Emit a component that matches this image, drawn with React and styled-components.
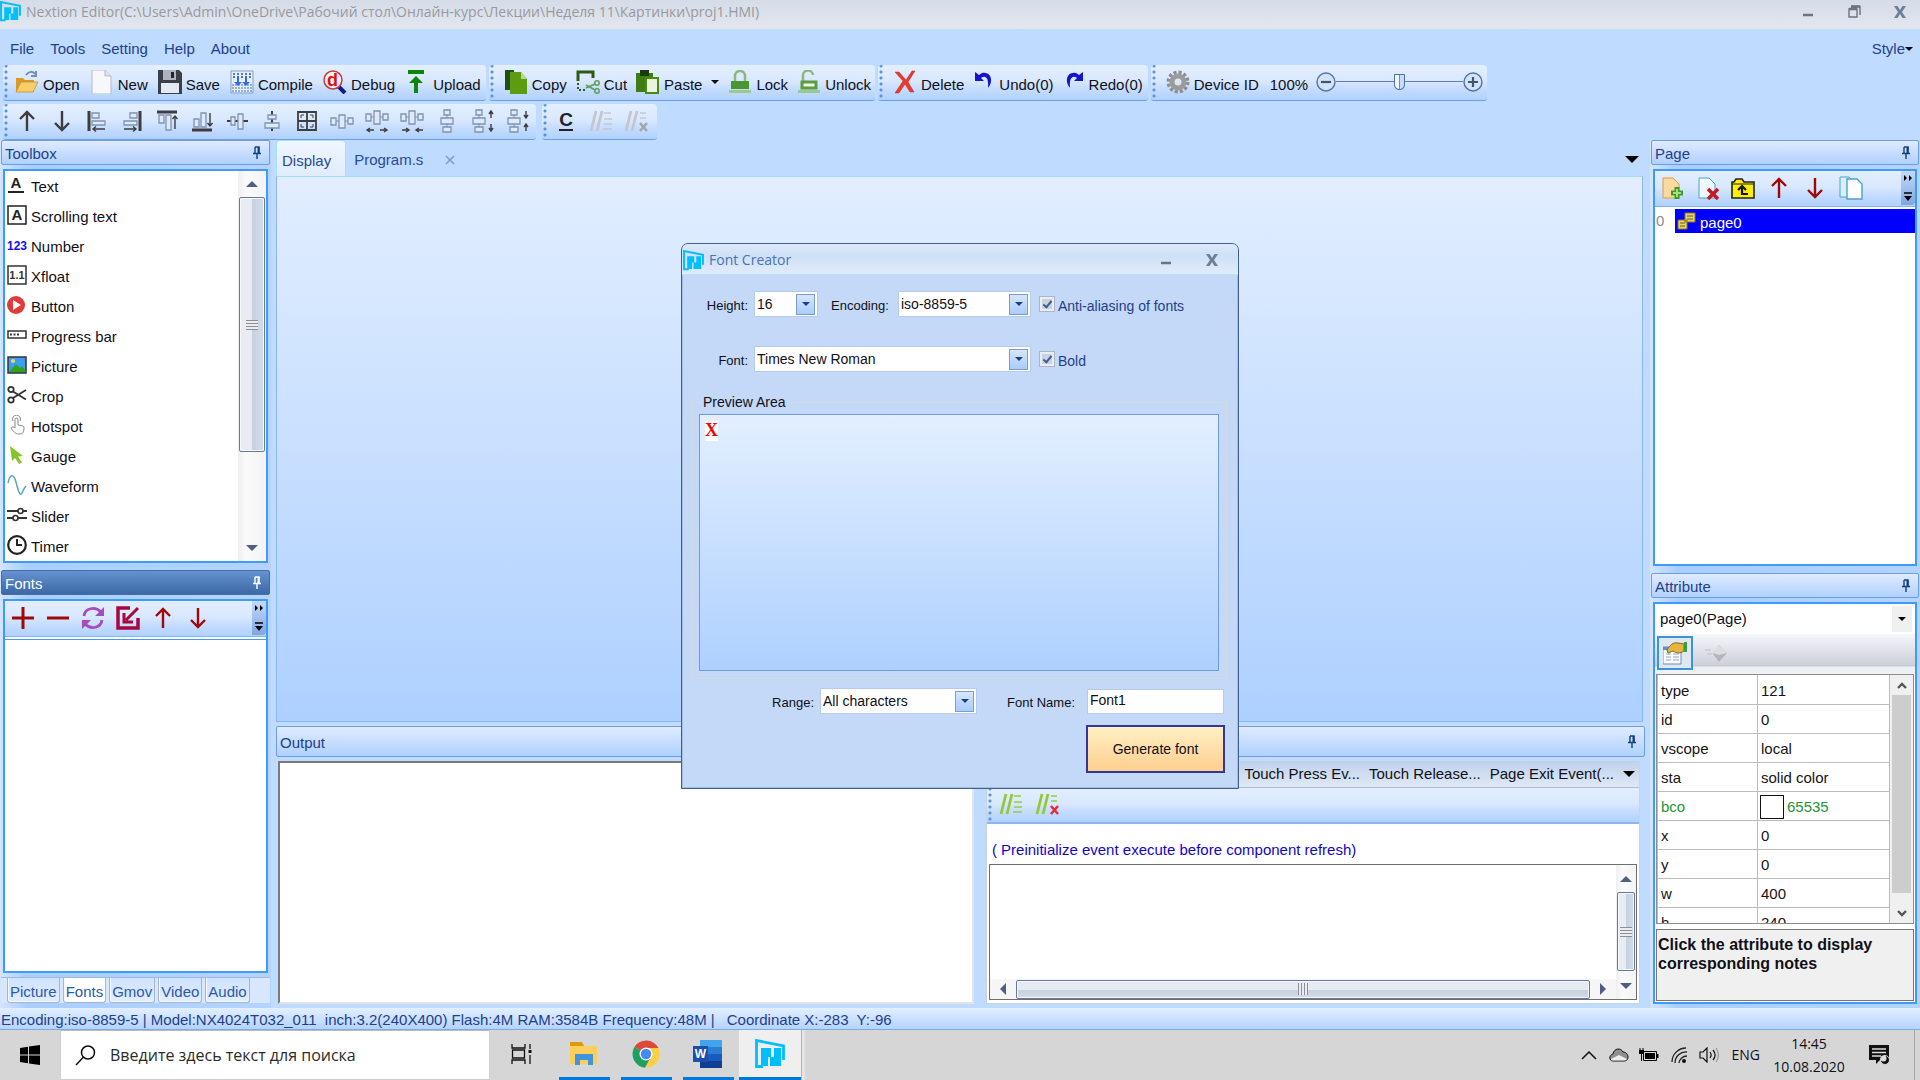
import React from "react";
import styled, { createGlobalStyle, css } from "styled-components";

const ui = '"Liberation Sans", Arial, sans-serif';
const shell = '"Open Sans", "Noto Sans", sans-serif';
const bar = "linear-gradient(#e3efff 0%, #d9e8ff 45%, #c4dcff 70%, #b0d1ff 100%)";
const navy = "#1f3f8a";

const Global = createGlobalStyle`
  *, *::before, *::after { box-sizing: border-box; }
  body { margin: 0; font: 15px/18px ${ui}; color: #101018; background: #bfdbff; }
  button, input, select, textarea { font: inherit; color: inherit; margin: 0; padding: 0; border: 0; background: none; border-radius: 0; }
  button { display: inline-flex; align-items: center; justify-content: center; cursor: default; white-space: nowrap; }
  svg { display: block; flex: none; }
  h1, h2, p, ul, table { margin: 0; padding: 0; font: inherit; }
  ul { list-style: none; }
`;

const Window = styled.div`
  display: flex;
  flex-direction: column;
  height: 100vh;
  overflow: hidden;
`;

/* ---------- window chrome ---------- */
const TitleBar = styled.header`
  display: flex;
  align-items: center;
  flex: none;
  height: 29px;
  padding: 0 8px 6px 0;
  background: linear-gradient(#d5dce8, #e2e7ef);
  color: #98999d;
`;
const TitleText = styled.h1`
  flex: 1;
  margin-left: 5px;
  font-family: ${shell};
  font-size: 14px;
  line-height: 20px;
`;
const WinButton = styled.button`
  width: 24px;
  height: 22px;
  margin-left: 22px;
`;
const MenuBar = styled.nav`
  display: flex;
  align-items: center;
  flex: none;
  height: 36px;
  padding: 4px 7px 0 10px;
  gap: 16px;
  color: ${navy};
`;
const Spacer = styled.span`
  flex: 1;
`;

/* ---------- toolbars ---------- */
const ToolRow = styled.div`
  display: flex;
  flex: none;
  padding: 0 3px ${(p) => p.$bottom || 0}px;
  gap: ${(p) => p.$gap || 3}px;
`;
const ToolGroup = styled.div`
  display: flex;
  align-items: center;
  height: 36px;
  padding: 0 ${(p) => p.$end || 4}px 2px ${(p) => p.$start || 12}px;
  gap: ${(p) => p.$gap || 9}px;
  background: radial-gradient(circle at 2px 2px, #5c93dd 1px, transparent 2px) 1px 5px / 4px 6px repeat-y, ${bar};
  border-bottom: 1px solid #6f9fe0;
  border-radius: 4px 4px 3px 3px;
`;
const Tool = styled.button`
  gap: 4px;
  align-items: center;
  span { padding-top: 7px; }
`;
const IconTool = styled.button`
  width: 24px;
  height: 24px;
`;
const Caret = styled.i`
  display: block;
  width: 0;
  height: 0;
  border: ${(p) => p.$s || 4}px solid transparent;
  border-top-color: ${(p) => p.$c || "#000"};
  border-bottom: 0;
`;
const CaretUp = styled(Caret)`
  transform: rotate(180deg);
`;
const CaretLeft = styled(Caret)`
  transform: rotate(90deg);
`;
const CaretRight = styled(Caret)`
  transform: rotate(-90deg);
`;
const Zoom = styled.div`
  display: flex;
  align-items: center;
  > label { padding: 7px 8px 0 0; }
`;
const Range = styled.input`
  appearance: none;
  width: 127px;
  height: 20px;
  background: linear-gradient(#5d7fb4, #5d7fb4) 0 9px / 100% 1px no-repeat;
  &::-webkit-slider-thumb {
    appearance: none;
    width: 11px;
    height: 16px;
    border: 1px solid #4e71a8;
    border-radius: 1px 1px 6px 6px;
    background: linear-gradient(90deg, #f4f8ff 40%, #6a8cc0 40%, #6a8cc0 55%, #c6dcf8 55%);
  }
`;

/* ---------- docking layout ---------- */
const Main = styled.main`
  display: flex;
  flex: 1;
  min-height: 0;
  gap: 4px;
`;
const Column = styled.div`
  display: flex;
  flex-direction: column;
  flex: ${(p) => (p.$w ? "none" : "1")};
  width: ${(p) => (p.$w ? p.$w + "px" : "auto")};
  min-width: 0;
  padding: 0 1px 4px;
  background: ${(p) => (p.$w ? "linear-gradient(90deg, #d3e5ff, #a9ceff 10%, #b4d4ff)" : "none")};
`;
const PanelHead = styled.div`
  display: flex;
  align-items: center;
  justify-content: space-between;
  flex: none;
  height: ${(p) => p.$h || 25}px;
  padding: 3px 7px 0 3px;
  color: ${(p) => (p.$active ? "#fff" : navy)};
  background: ${(p) => (p.$active ? "linear-gradient(#6592d0, #3c68a6)" : "linear-gradient(#dfebff, #b0d1ff)")};
  border: 1px solid ${(p) => (p.$active ? "#44709f" : "#6d9de0")};
  border-radius: 2px;
  svg { margin-bottom: 4px; }
`;
const Body = styled.section`
  display: flex;
  flex-direction: column;
  flex: ${(p) => (p.$h ? "none" : "1")};
  height: ${(p) => (p.$h ? p.$h + "px" : "auto")};
  min-height: 0;
  margin: 4px 2px ${(p) => p.$mb || 0}px;
  border: 2px solid #3e9bfa;
  background: #fff;
  overflow: hidden;
`;
const ToolboxWrap = styled.div`
  display: flex;
  flex: 1;
  min-height: 0;
`;
const ToolboxList = styled.ul`
  flex: 1;
  padding-top: 1px;
  overflow: hidden;
`;
const ToolboxItem = styled.li`
  height: 30px;
`;
const ToolboxButton = styled.button`
  gap: 4px;
  width: 100%;
  height: 30px;
  padding-left: 2px;
  justify-content: flex-start;
  svg { margin-bottom: 4px; }
`;

/* ---------- scrollbars ---------- */
const VScroll = styled.div`
  display: flex;
  flex-direction: column;
  align-items: center;
  flex: none;
  width: ${(p) => p.$w || 28}px;
  background: linear-gradient(90deg, #efefef, #fafafa 30%, #f3f3f3);
`;
const HScroll = styled.div`
  display: flex;
  align-items: center;
  flex: none;
  height: 20px;
  background: #f6f6f6;
`;
const Arrow = styled.button`
  width: 26px;
  height: ${(p) => p.$h || 27}px;
`;
const thumb = css`
  display: flex;
  align-items: center;
  justify-content: center;
  border: 1px solid #66789c;
  border-radius: 2px;
  box-shadow: inset 0 0 0 1px #f4f7fb;
`;
const VThumb = styled.div`
  ${thumb}
  width: calc(100% - 2px);
  height: ${(p) => p.$h}px;
  background: linear-gradient(90deg, #e9edf2 50%, #c6d2e0 52%, #d3dce8);
`;
const HThumb = styled.div`
  ${thumb}
  flex: 1;
  height: 19px;
  background: linear-gradient(#e6ebf2 50%, #c6d0de 52%, #d3dce8);
`;
const VGrip = styled.span`
  width: 12px;
  height: 10px;
  background: repeating-linear-gradient(#8d8f94 0 1px, #e9edf2 1px 3px);
`;
const HGrip = styled.span`
  width: 10px;
  height: 12px;
  background: repeating-linear-gradient(90deg, #8d8f94 0 1px, #e9edf2 1px 3px);
`;

/* ---------- small panels ---------- */
const PanelTools = styled.div`
  display: flex;
  align-items: center;
  flex: none;
  height: 36px;
  padding-left: ${(p) => p.$pad || 0}px;
  padding-bottom: 1px;
  gap: ${(p) => p.$gap}px;
  background: ${bar};
  border-bottom: 1px solid #86b2ee;
`;
const Overflow = styled.button`
  flex-direction: column;
  justify-content: space-between;
  width: 14px;
  height: 34px;
  padding: 4px 0 4px;
  margin-left: auto;
  background: linear-gradient(#c3dafa, #7fa6e0);
  border-radius: 0 0 4px 0;
`;
const FontList = styled.div`
  flex: 1;
  border-top: 1px solid #3e9bfa;
  margin-top: 2px;
`;
const DockTabs = styled.div`
  display: flex;
  flex: none;
  height: 26px;
  gap: 3px;
  padding-left: 6px;
  margin: 4px 0 1px;
  background: #d8e7ff;
  border-top: 1px solid #9db9e2;
`;
const DockTab = styled.button`
  height: 25px;
  padding: 3px 2px 0;
  color: #2a5aa8;
  background: ${(p) => (p.$on ? "#fff" : "linear-gradient(#cfe2ff, #e2edff)")};
  border: 1px solid #a3b6d6;
  border-top: 0;
  box-shadow: inset 1px -1px #f4f8ff;
  border-radius: 0 0 3px 3px;
`;

/* ---------- documents ---------- */
const DocTabs = styled.div`
  display: flex;
  align-items: flex-end;
  flex: none;
  height: 36px;
  color: #2a4a94;
`;
const DocTab = styled.button`
  height: ${(p) => (p.$on ? 36 : 32)}px;
  padding: ${(p) => (p.$on ? "4px 14px 0 5px" : "0 18px 0 8px")};
  gap: 22px;
  background: ${(p) => (p.$on ? "linear-gradient(#f0f6ff, #e0ecfb)" : "none")};
  border: ${(p) => (p.$on ? "1px solid #a5e0f5" : "0")};
  border-bottom: 0;
  border-radius: 4px 4px 0 0;
`;
const Canvas = styled.section`
  flex: 1;
  min-height: 0;
  margin: 0 2px 4px 0;
  border: 1px solid #8db6ee;
  border-top-color: #a5dcf7;
  background: linear-gradient(#e2eeff, #aed0ff);
`;
const OutputRow = styled.div`
  display: flex;
  flex: none;
  height: 243px;
  margin-top: 4px;
  gap: 12px;
`;
const OutputBox = styled.textarea`
  flex: 695;
  min-width: 0;
  margin-left: 2px;
  resize: none;
  background: #fff;
  border: 2px solid #e2e4e8;
  border-top-color: #7a7a7a;
  border-left-color: #7a7a7a;
`;
const Events = styled.section`
  display: flex;
  flex-direction: column;
  flex: 655;
  min-width: 0;
  margin-right: 5px;
  background: #fff;
  border: 1px solid #c8d4e4;
  border-top: 0;
`;
const EventTabs = styled.div`
  display: flex;
  align-items: center;
  justify-content: flex-end;
  flex: none;
  height: 27px;
  gap: 9px;
  padding-right: 4px;
  background: linear-gradient(#bfd1ea, #dfe9f6);
  border-bottom: 1px solid #aebdd2;
`;
const EventTools = styled(ToolGroup)`
  flex: none;
  border-radius: 0;
  border-bottom: 2px solid #8db6ee;
`;
const Hint = styled.p`
  padding: 17px 5px 5px;
  color: #1404c8;
`;
const Editor = styled.div`
  display: flex;
  flex: 1;
  min-height: 0;
  margin: 0 2px 3px;
  border: 1px solid #6f6f6f;
`;
const EditorMain = styled.div`
  display: flex;
  flex-direction: column;
  flex: 1;
  min-width: 0;
`;
const Code = styled.textarea`
  flex: 1;
  min-height: 0;
  resize: none;
`;

/* ---------- page + attributes ---------- */
const PageRow = styled.div`
  display: flex;
  align-items: center;
  height: 24px;
  margin-top: 2px;
  color: #8c8c8c;
  > span { width: 20px; padding-left: 1px; }
`;
const PageName = styled.button`
  flex: 1;
  height: 24px;
  gap: 4px;
  padding-left: 1px;
  justify-content: flex-start;
  background: #0000fe;
  color: #fff;
  span { padding-top: 3px; }
`;
const AttrSelect = styled.div`
  display: flex;
  align-items: center;
  flex: none;
  height: 30px;
  padding: 0 3px 0 5px;
  select { flex: 1; appearance: none; height: 26px; }
  span { display: flex; align-items: center; justify-content: center; width: 20px; height: 26px; background: #f0f0f0; }
`;
const AttrTools = styled.div`
  display: flex;
  align-items: center;
  flex: none;
  height: 40px;
  padding: 0 2px 2px;
  gap: 6px;
  background: linear-gradient(#f6f7fa, #cdd0da 78%, #b9bcc4 80%, #eef0f6 82%);
`;
const AttrTool = styled.button`
  width: 36px;
  height: 34px;
  border: ${(p) => (p.$on ? "2px solid #3a94dc" : "0")};
  background: ${(p) => (p.$on ? "#dfe8f0" : "none")};
`;
const GridWrap = styled.div`
  display: flex;
  flex: 1;
  min-height: 0;
  margin: 0 1px 5px;
  border: 1px solid #8e8e8e;
  overflow: hidden;
  > div:first-child { flex: 1; overflow: hidden; }
`;
const AttrTable = styled.table`
  width: 100%;
  border-collapse: collapse;
  table-layout: fixed;
  th, td { height: 29px; padding: 3px 4px 0 3px; font-weight: normal; text-align: left; border: 1px solid #bcbcbc; border-top: 0; }
  th { width: 100px; }
`;
const AttrRow = styled.tr`
  color: ${(p) => (p.$green ? "#1e9632" : "#151515")};
  div { display: flex; align-items: center; gap: 3px; height: 24px; margin-left: -1px; }
`;
const Swatch = styled.i`
  width: 24px;
  height: 24px;
  border: 1px solid #111;
  background: #fff;
`;
const PlainScroll = styled.div`
  display: flex;
  flex-direction: column;
  flex: none;
  width: 23px;
  padding: 0 2px;
  background: #f0f0f0;
  button { height: 20px; }
  i { flex: 1; margin-bottom: 10px; background: #cdcdcd; }
`;
const Notes = styled.p`
  flex: none;
  height: 72px;
  margin: 0 1px 1px;
  padding: 5px 1px;
  font-weight: bold;
  font-size: 16px;
  line-height: 19px;
  background: #f0f0f0;
  border: 1px solid #777;
`;
const StatusBar = styled.footer`
  display: flex;
  flex: none;
  height: 22px;
  padding: 3px 1px 0;
  gap: 12px;
  color: ${navy};
  background: linear-gradient(#e3efff, #b4d3ff);
  border-bottom: 1px solid #7ea9e2;
  white-space: pre;
`;

/* ---------- taskbar ---------- */
const Taskbar = styled.footer`
  display: flex;
  flex: none;
  height: 50px;
  background: #d6d6d6;
  font-family: ${shell};
`;
const Start = styled.button`
  width: 60px;
`;
const Search = styled.label`
  display: flex;
  align-items: center;
  gap: 14px;
  width: 430px;
  padding-left: 14px;
  background: #fff;
  border: 1px solid #cfcfcf;
  border-top-color: #bbb;
  input { flex: 1; min-width: 0; font-size: 16px; outline: 0; }
  input::placeholder { color: #2b2b2b; opacity: 1; }
`;
const TaskButton = styled.button`
  display: grid;
  grid-template: 47px 3px / 1fr;
  justify-items: center;
  align-items: center;
  width: ${(p) => p.$w || 62}px;
  background: ${(p) => (p.$on ? "#efefef" : "none")};
  box-shadow: ${(p) => (p.$on ? "1px 0 #b5b5b5, 4px 0 #e4e4e4" : "none")};
  &::after {
    content: "";
    width: ${(p) => (p.$on ? "100%" : "51px")};
    height: 3px;
    background: ${(p) => (p.$open ? "#0078d7" : "transparent")};
  }
`;
const Tray = styled.div`
  display: flex;
  align-items: center;
  margin-left: auto;
  padding-right: 5px;
  gap: 8px;
  font-size: 14px;
`;
const TrayButton = styled.button`
  min-width: 22px;
  height: 30px;
  padding-left: ${(p) => p.$pl || 0}px;
`;
const Clock = styled.time`
  width: 82px;
  text-align: center;
  line-height: 23px;
`;
const Notify = styled.button`
  width: 57px;
  height: 50px;
  padding-right: 14px;
  border-right: 1px solid #a8a8a8;
`;

/* ---------- Font Creator dialog ---------- */
const Overlay = styled.div`
  position: fixed;
  inset: 0;
  display: flex;
  justify-content: center;
  align-items: flex-start;
  padding-top: 243px;
  pointer-events: none;
`;
const Dialog = styled.form`
  width: 558px;
  pointer-events: auto;
  background: #c3d9f7;
  border: 1px solid #3f618f;
  border-radius: 7px 7px 0 0;
  box-shadow: inset 0 0 0 1px #a3bddf;
  font-size: 14px;
`;
const DialogHead = styled.div`
  display: flex;
  align-items: center;
  height: 31px;
  padding: 2px 14px 0 1px;
  color: #4a72b4;
  background: linear-gradient(#dce9f9, #cfe0f7 40%, #e0ecfb);
  border-bottom: 1px solid #b8e2f4;
  border-radius: 6px 6px 0 0;
  h2 { flex: 1; margin-left: 5px; font-family: ${shell}; font-size: 14px; }
`;
const DialogBody = styled.div`
  display: flex;
  flex-direction: column;
  padding: 16px 11px 15px 10px;
`;
const Line = styled.div`
  display: flex;
  align-items: center;
  gap: 6px;
  height: 26px;
  margin-bottom: ${(p) => p.$mb}px;
  padding-right: 3px;
  padding-left: ${(p) => p.$left || 0}px;
  justify-content: ${(p) => (p.$right ? "flex-end" : "flex-start")};
`;
const Label = styled.label`
  width: ${(p) => (p.$w ? p.$w + "px" : "auto")};
  margin-left: ${(p) => p.$ml || 0}px;
  padding-top: 4px;
  text-align: ${(p) => p.$align || "right"};
  font-size: 13px;
`;
const Combo = styled.div`
  display: flex;
  align-items: center;
  width: ${(p) => p.$w}px;
  height: 26px;
  padding-right: 2px;
  background: #fff;
  border: 1px solid #b5cbe8;
  select { flex: 1; min-width: 0; height: 22px; appearance: none; padding: 0 2px; }
  span {
    display: flex;
    align-items: center;
    justify-content: center;
    width: 19px;
    height: 21px;
    border: 1px solid #7f9dcc;
    background: linear-gradient(#d6e6fd, #a9ccfb);
    pointer-events: none;
  }
`;
const Check = styled.label`
  display: flex;
  align-items: center;
  gap: 3px;
  margin-left: 2px;
  color: ${navy};
  span { padding-top: 3px; }
  input {
    appearance: none;
    width: 16px;
    height: 16px;
    border: 1px solid #a9b6c8;
    box-shadow: inset 0 0 0 2px #e9eef5;
    background: #c9d3e0;
    display: grid;
    place-items: center;
  }
  input:checked::after {
    content: "";
    width: 5px;
    height: 9px;
    margin-top: -2px;
    border: solid #3f5f92;
    border-width: 0 2px 2px 0;
    transform: rotate(40deg);
  }
`;
const Group = styled.fieldset`
  min-width: 0;
  margin: 0 0 9px;
  padding: 2px 7px 7px 6px;
  border: 1px solid #d3dbe2;
  legend { padding: 0 4px; line-height: 20px; }
`;
const Preview = styled.div`
  height: 257px;
  padding: 6px 5px;
  border: 1px solid #6f9bd8;
  background: linear-gradient(#e3efff, #aed0ff);
  b { display: inline-block; height: 20px; background: #fff; color: #f00; font: bold 18px/19px "Liberation Serif", serif; }
`;
const NameInput = styled.input`
  width: 137px;
  height: 25px;
  padding: 0 2px 2px;
  margin-left: 6px;
  background: #fff;
  border: 1px solid #b5cbe8;
`;
const Generate = styled.button`
  align-self: flex-end;
  width: 139px;
  height: 48px;
  margin: 0 2px 0 0;
  border: 2px solid #34349c;
  background: linear-gradient(#ffefc4, #ffcf8f);
`;

/* ---------- drawings ---------- */
const S = ({ s = 24, w, h, vb = "0 0 24 24", children }) => (
  <svg width={w || s} height={h || s} viewBox={vb} fill="none" aria-hidden="true">{children}</svg>
);
const Letter = ({ x, y, s, c, w = "bold", children }) => (
  <text x={x} y={y} textAnchor="middle" fontFamily="Liberation Sans" fontWeight={w} fontSize={s} fill={c}>{children}</text>
);
const Logo = ({ s = 21 }) => (
  <S s={s} vb="0 0 30 30">
    <path d="M8 27.500H1.500V1.500L28.500 7v14" stroke="#00bfff" strokeWidth="2.800" />
    <path d="M6 9h10v9h3V9h7v18H15v-9h-2v9H6z" fill="#00bfff" />
  </S>
);
const Pin = ({ c = "#123f80" }) => (
  <S w={10} h={13} vb="0 0 10 13"><path d="M3 1v6M3 1h4v6M1 7.500h8M5 8v5" stroke={c} strokeWidth="1.400" /><path d="M6.500 1v6" stroke={c} strokeWidth="2" /></S>
);
const page = <path d="M4 2h10l6 6v14H4z" />;
const I = {
  open: <S><path d="M1 8h7l2 2h9v12H1z" fill="#d99a2b" /><path d="M1 22 6 12h17l-5 10z" fill="#f7cf68" stroke="#c98f28" strokeWidth=".8" /><path d="M11 5c3-4 7-4 9-1m1-3v5h-5" stroke="#6f8fb5" strokeWidth="2" /></S>,
  newf: <S><path d="M2 0h13l6 6v18H2z" fill="#f7f8fc" stroke="#b5b9c8" /><path d="M15 0v6h6" fill="#dfe3ee" stroke="#b5b9c8" /></S>,
  save: <S><path d="M0 0h21l3 3v21H0z" fill="#3a4048" /><path d="M5 0h13v10H5z" fill="#aeb4bf" /><path d="M13 2h3v6h-3z" fill="#20242a" /><path d="M3 13h18v10H3z" fill="#e4e8f0" /></S>,
  compile: <S><path d="M1 1h22v22H1z" fill="#e4eefc" stroke="#7f9fd0" /><path d="M3 4h18M3 7h18" stroke="#6b7890" strokeWidth="2" strokeDasharray="2 2" /><path d="M2 15h20M2 18h20M2 21h20" stroke="#7a97cc" strokeDasharray="2 1" strokeWidth="1.500" /><path d="M7 6v6H4l4 4 4-4H9V6zM15 6v6h-3l4 4 4-4h-3V6z" fill="#2f6ee0" /></S>,
  debug: <S><path d="M15 16l7 7" stroke="#15158c" strokeWidth="4" /><circle cx="10" cy="10" r="9" fill="#f3f3f6" stroke="#c9383a" strokeWidth="1.500" /><Letter x={9.5} y={16} s={18} c="#e01010">d</Letter></S>,
  upload: <S><path d="M3 0h16v4H3z" fill="#0a860a" /><path d="M11 6l7 7h-5v10H9V13H4z" fill="#0a860a" /></S>,
  copy: <S><path d="M1 0h9v20H1z" fill="#1e5210" /><path d="M6 2h11l6 7v15H6z" fill="#5d9c10" /><path d="M17 2v7h6z" fill="#b6d98a" /></S>,
  cut: <S><path d="M17 8V2H2v9" stroke="#2c5c14" strokeWidth="3" /><path d="M2 13v7h8" stroke="#2c5c14" strokeWidth="2" strokeDasharray="2 2" /><circle cx="21" cy="13" r="2.200" stroke="#5f9c5a" strokeWidth="1.500" /><circle cx="21" cy="21" r="2.200" stroke="#5f9c5a" strokeWidth="1.500" /><path d="M19 14l-9 4M19 20l-9-5" stroke="#5f9c5a" strokeWidth="1.500" /></S>,
  paste: <S><path d="M0 3h17v19H0z" fill="#3f7d12" /><path d="M4 0h9v6H4z" fill="#173f0c" /><path d="M10 8h12v15H10z" fill="#eaf3dc" stroke="#4b8a12" strokeWidth="2" /></S>,
  lock: <S><path d="M7 11V6a5 5 0 0 1 10 0v5" stroke="#8bb878" strokeWidth="2.500" /><path d="M3 11h18v8H3z" fill="#4a9630" /><path d="M1 20h22v3H1z" fill="#9cc88c" /></S>,
  unlock: <S><path d="M6 11V6a5 5 0 0 1 10-1" stroke="#8bb878" strokeWidth="2.500" /><path d="M5 12h14v6H5z" fill="#eef7e6" stroke="#5a9c40" strokeWidth="3" /><path d="M1 20h22v3H1z" fill="#9cc88c" /></S>,
  del: <S><path d="M2 2h4l7 8 6-9h3l-7 11 6 10h-4l-5-8-6 9H2l8-12z" fill="#ee3a2c" stroke="#b52a20" strokeWidth=".5" /></S>,
  undo: <S w={22} h={24} vb="0 0 22 24"><path d="M2 2v9h9L8 8c4-3 8-1 7 10 6-7 3-17-6-15L6 5z" fill="#1414cc" /></S>,
  redo: <S w={22} h={24} vb="0 0 22 24"><path d="M20 2v9h-9l3-3C10 5 6 7 7 18 1 11 4 1 13 3l3 2z" fill="#1414cc" /></S>,
  gear: <S><circle cx="12" cy="12" r="9.500" stroke="#8e8e8e" strokeWidth="4" strokeDasharray="3 2" /><circle cx="12" cy="12" r="6" stroke="#9b9b9b" strokeWidth="5" /><circle cx="12" cy="12" r="3" fill="#dfe6f2" /></S>,
};
const dk = "#3d3d3d";
const arrowUp = (c) => <S><path d="M12 22V3M5 10l7-7 7 7" stroke={c} strokeWidth="2.400" /></S>;
const arrowDown = (c) => <S><path d="M12 2v19M5 14l7 7 7-7" stroke={c} strokeWidth="2.400" /></S>;
const bx = { fill: "#dfeaf8", stroke: "#7f93b0", strokeWidth: 1.3 };
const hTrio = <><path d="M0 10h24" stroke="#7f93b0" /><path d="M1 7h5v7H1zM9 4h6v13H9zM18 7h5v6h-5z" {...bx} /></>;
const vTrio = <><path d="M9 0v24" stroke="#7f93b0" /><path d="M6 1h6v5H6zM3 9h12v6H3zM5 18h8v5H5z" {...bx} /></>;
const align = [
  ["Bring forward", arrowUp(dk)],
  ["Send backward", arrowDown(dk)],
  ["Align left", <S><path d="M4 2v20" stroke={dk} strokeWidth="3" /><path d="M7 4h7v5H7zM7 12h13v4H7z" {...bx} /><path d="M20 20H8m3-2.500L8 20l3 2.500" stroke={dk} strokeWidth="1.400" /></S>],
  ["Align right", <S><path d="M20 2v20" stroke={dk} strokeWidth="3" /><path d="M10 4h7v5h-7zM4 12h13v4H4z" {...bx} /><path d="M4 20h12m-3-2.500 3 2.500-3 2.500" stroke={dk} strokeWidth="1.400" /></S>],
  ["Align top", <S><path d="M2 3h20" stroke={dk} strokeWidth="3" /><path d="M4 6h5v8H4zM11 6h5v15h-5z" {...bx} /><path d="M20 20V7m-2.500 3L20 7l2.500 3" stroke={dk} strokeWidth="1.400" /></S>],
  ["Align bottom", <S><path d="M2 21h20" stroke={dk} strokeWidth="3" /><path d="M4 10h5v8H4zM11 4h5v14h-5z" {...bx} /><path d="M20 4v13m-2.500-3L20 17l2.500-3" stroke={dk} strokeWidth="1.400" /></S>],
  ["Align middle", <S><path d="M2 12h21" stroke={dk} strokeWidth="2" /><path d="M6 8h4v8H6zM13 5h5v15h-5z" {...bx} /></S>],
  ["Align centre", <S><path d="M12 2v20" stroke={dk} strokeWidth="2" /><path d="M8 6h8v4H8zM5 14h14v5H5z" {...bx} /></S>],
  ["Same size", <S><path d="M3 3h18v18H3zM12 3v18M3 12h18" stroke={dk} strokeWidth="1.800" /><path d="M6 9V6h3M15 6h3v3M18 15v3h-3M9 18H6v-3" stroke={dk} /></S>],
  ["Equal horizontal spacing", <S><g transform="translate(0 2)">{hTrio}</g></S>],
  ["Increase horizontal spacing", <S><g transform="translate(0 -2)">{hTrio}</g><path d="M9 21H2m3-2-3 2 3 2M15 21h7m-3-2 3 2-3 2" stroke={dk} strokeWidth="1.400" /></S>],
  ["Decrease horizontal spacing", <S><g transform="translate(0 -2)">{hTrio}</g><path d="M2 21h7m-3-2 3 2-3 2M23 21h-7m3-2-3 2 3 2" stroke={dk} strokeWidth="1.400" /></S>],
  ["Equal vertical spacing", <S><g transform="translate(3 0)">{vTrio}</g></S>],
  ["Increase vertical spacing", <S>{vTrio}<path d="M21 9V2m-2 3 2-3 2 3M21 15v7m-2-3 2 3 2-3" stroke={dk} strokeWidth="1.400" /></S>],
  ["Decrease vertical spacing", <S>{vTrio}<path d="M21 2v7m-2-3 2 3 2-3M21 22v-7m-2 3 2-3 2 3" stroke={dk} strokeWidth="1.400" /></S>],
];
const Comment = ({ c, x }) => (
  <S><path d="M2 22 7 2M8 22l5-20" stroke={c} strokeWidth="2.800" /><path d={x ? "M16 4h6M16 9h6" : "M15 4h7M15 10h8M15 15h8M14 20h9"} stroke={c} strokeWidth="2" opacity=".7" />{x && <path d="M16 14l7 8M23 14l-7 8" stroke={x} strokeWidth="2.600" />}</S>
);
const t20 = (k) => <S s={20} vb="0 0 20 20">{k}</S>;
const toolbox = [
  ["Text", t20(<><Letter x={9} y={13} s={15} c="#222">A</Letter><path d="M1 17h16" stroke="#222" strokeWidth="2" /></>)],
  ["Scrolling text", t20(<><path d="M1 1h18v18H1z" stroke="#222" strokeWidth="1.500" /><Letter x={10} y={15} s={15} c="#222">A</Letter></>)],
  ["Number", t20(<Letter x={10} y={15} s={12} w="bold" c="#1010f0">123</Letter>)],
  ["Xfloat", t20(<><path d="M1 1h18v18H1z" stroke="#333" strokeWidth="1.500" /><Letter x={10} y={14} s={11} c="#333">1.1</Letter></>)],
  ["Button", t20(<><circle cx="9" cy="10" r="9" fill="#e2393a" /><path d="M6 5l8 5-8 5z" fill="#fff" /></>)],
  ["Progress bar", t20(<><path d="M1 6h18v7H1z" stroke="#333" strokeWidth="1.500" /><path d="M3 9.500h9" stroke="#333" strokeWidth="2" strokeDasharray="2 1.500" /></>)],
  ["Picture", t20(<><path d="M1 2h18v16H1z" fill="#3d9df0" stroke="#333" strokeWidth="1.500" /><circle cx="6" cy="6" r="2" fill="#f6d466" /><path d="M2 17l7-8 4 4 2-2 4 6z" fill="#2ea316" /></>)],
  ["Crop", t20(<><circle cx="4" cy="4.500" r="2.700" stroke="#333" strokeWidth="1.800" /><circle cx="4" cy="15" r="2.700" stroke="#333" strokeWidth="1.800" /><path d="M6 6.500l13 8M6 13l13-8" stroke="#333" strokeWidth="1.800" /></>)],
  ["Hotspot", t20(<><path d="M8 12V4.500a1.500 1.500 0 0 1 3 0V10l5 1c1 .5 1 1 1 3-1 5-2 5-5 5-4 0-6-3-8-6 1-2 3-1 4 0z" fill="#fff" stroke="#888" /><path d="M6 6a4 4 0 1 1 7 0" stroke="#888" /></>)],
  ["Gauge", t20(<path d="M3 1l13 10-5 .5 4 6-3 1.500-4-6-3 3z" fill="#86c42c" />)],
  ["Waveform", t20(<path d="M1 8C3-2 7-1 9 7s4 15 6 11 2-5 4-7" stroke="#5aa5c0" strokeWidth="1.500" />)],
  ["Slider", t20(<><path d="M0 6h11M16 6h4M0 13h6M11 13h9" stroke="#333" strokeWidth="1.800" /><circle cx="13.500" cy="6" r="2.500" stroke="#333" strokeWidth="1.600" /><circle cx="8.500" cy="13" r="2.500" stroke="#333" strokeWidth="1.600" /></>)],
  ["Timer", t20(<><circle cx="10" cy="10" r="8.800" stroke="#222" strokeWidth="2.200" /><path d="M10 4v6h5" stroke="#222" strokeWidth="2" /></>)],
];
const red = "#a00808";
const Close = ({ c = "#6b7f99" }) => <S s={14} vb="0 0 14 14"><path d="M1 1h3.500l2.500 4 2.500-4H13L9 7l4 6H9.500L7 9l-2.500 4H1l4-6z" fill={c} /></S>;
const Min = () => <S w={12} h={12} vb="0 0 12 12"><path d="M1 9h10" stroke="#6b7480" strokeWidth="2.500" /></S>;
const Dots = () => (
  <Overflow type="button" aria-label="More tools">
    <S w={10} h={6} vb="0 0 10 6"><path d="M1 0l3 3-3 3zM6 0l3 3-3 3z" fill="#000" /></S>
    <S w={10} h={9} vb="0 0 10 9"><path d="M1 1h8" stroke="#000" strokeWidth="1.500" /><path d="M1 4h8L5 9z" fill="#000" /></S>
  </Overflow>
);
const RoundBtn = ({ plus }) => (
  <S s={20} vb="0 0 20 20"><circle cx="10" cy="10" r="9" fill="#d3e3f8" stroke="#55749f" strokeWidth="1.400" /><path d={plus ? "M5 10h10M10 5v10" : "M5 10h10"} stroke="#44546c" strokeWidth="2.200" /></S>
);

const T = ({ icon, children }) => <Tool type="button">{icon}<span>{children}</span></Tool>;
const V = ({ h, top, w, bottom }) => (
  <VScroll $w={w}>
    <Arrow type="button" aria-label="Scroll up" $h={top}><CaretUp $s={6} $c="#4d5f86" /></Arrow>
    <VThumb $h={h}><VGrip /></VThumb>
    <Spacer />
    <Arrow type="button" aria-label="Scroll down" $h={bottom}><Caret $s={6} $c="#4d5f86" /></Arrow>
  </VScroll>
);
const attrs = [["type", "121"], ["id", "0"], ["vscope", "local"], ["sta", "solid color"], ["bco", "65535"], ["x", "0"], ["y", "0"], ["w", "400"], ["h", "240"]];

const Select = ({ id, w, value }) => (
  <Combo $w={w}><select id={id} defaultValue={value}><option>{value}</option></select><span><Caret $c="#173f8a" /></span></Combo>
);

function FontCreator() {
  return (
    <Overlay>
      <Dialog role="dialog" aria-label="Font Creator" onSubmit={(e) => e.preventDefault()}>
        <DialogHead>
          <Logo /><h2>Font Creator</h2>
          <WinButton type="button" aria-label="Minimize"><Min /></WinButton>
          <WinButton type="button" aria-label="Close"><Close /></WinButton>
        </DialogHead>
        <DialogBody>
          <Line $left={9} $mb={29}>
            <Label htmlFor="height" $w={47}>Height:</Label><Select id="height" w={64} value="16" />
            <Label htmlFor="enc" $w={61} $ml={7} $align="left">Encoding:</Label><Select id="enc" w={133} value="iso-8859-5" />
            <Check><input type="checkbox" defaultChecked /><span>Anti-aliasing of fonts</span></Check>
          </Line>
          <Line $left={9} $mb={20}>
            <Label htmlFor="font" $w={47}>Font:</Label><Select id="font" w={277} value="Times New Roman" />
            <Check><input type="checkbox" defaultChecked /><span>Bold</span></Check>
          </Line>
          <Group><legend>Preview Area</legend><Preview><b>X</b></Preview></Group>
          <Line $right $mb={11}>
            <Label htmlFor="range">Range:</Label><Select id="range" w={157} value="All characters" />
            <Label htmlFor="name" $ml={20} $w={72}>Font Name:</Label><NameInput id="name" defaultValue="Font1" />
          </Line>
          <Generate type="submit">Generate font</Generate>
        </DialogBody>
      </Dialog>
    </Overlay>
  );
}

export default function App() {
  return (
    <Window>
      <Global />
      <TitleBar>
        <Logo /><TitleText>Nextion Editor(C:\Users\Admin\OneDrive\Рабочий стол\Онлайн-курс\Лекции\Неделя 11\Картинки\proj1.HMI)</TitleText>
        <WinButton type="button" aria-label="Minimize"><Min /></WinButton>
        <WinButton type="button" aria-label="Restore"><S s={13} vb="0 0 13 13"><path d="M1 4h8v8H1zM3 1.500h9V10" stroke="#6b7480" strokeWidth="1.400" /><path d="M1 4h8M3 1.500h9" stroke="#6b7480" strokeWidth="2.500" /></S></WinButton>
        <WinButton type="button" aria-label="Close"><Close /></WinButton>
      </TitleBar>
      <MenuBar>
        {["File", "Tools", "Setting", "Help", "About"].map((m) => <button type="button" key={m}>{m}</button>)}
        <Spacer />
        <button type="button">Style<Caret /></button>
      </MenuBar>
      <ToolRow $bottom={3}>
        <ToolGroup $gap={10} $end={5}>
          <T icon={I.open}>Open</T><T icon={I.newf}>New</T><T icon={I.save}>Save</T>
          <T icon={I.compile}>Compile</T><T icon={I.debug}>Debug</T><T icon={I.upload}>Upload</T>
        </ToolGroup>
        <ToolGroup $start={15}>
          <T icon={I.copy}>Copy</T><T icon={I.cut}>Cut</T><T icon={I.paste}>Paste</T>
          <button type="button" aria-label="Paste options"><Caret /></button>
          <T icon={I.lock}>Lock</T><T icon={I.unlock}>Unlock</T>
        </ToolGroup>
        <ToolGroup $start={15} $end={5}>
          <T icon={I.del}>Delete</T><T icon={I.undo}>Undo(0)</T><T icon={I.redo}>Redo(0)</T>
        </ToolGroup>
        <ToolGroup $start={15} $gap={11}>
          <T icon={I.gear}>Device ID</T>
          <Zoom><label htmlFor="zoom">100%</label>
            <button type="button" aria-label="Zoom out"><RoundBtn /></button>
            <Range type="range" id="zoom" defaultValue="50" />
            <button type="button" aria-label="Zoom in"><RoundBtn plus /></button>
          </Zoom>
        </ToolGroup>
      </ToolRow>
      <ToolRow $gap={6}>
        <ToolGroup $gap={11} $end={7}>
          {align.map(([n, icon]) => <IconTool type="button" key={n} aria-label={n}>{icon}</IconTool>)}
        </ToolGroup>
        <ToolGroup $gap={11} $end={9}>
          <IconTool type="button" aria-label="Syntax check"><S><Letter x={12} y={17} s={19} c="#222">C</Letter><path d="M5 21h14" stroke="#222" strokeWidth="2" /></S></IconTool>
          <IconTool type="button" aria-label="Comment"><Comment c="#c3c6cc" /></IconTool>
          <IconTool type="button" aria-label="Uncomment"><Comment c="#c3c6cc" x="#a3a6ac" /></IconTool>
        </ToolGroup>
      </ToolRow>

      <Main>
        <Column $w={271}>
          <PanelHead><span>Toolbox</span><Pin /></PanelHead>
          <Body $h={394} $mb={7}>
            <ToolboxWrap>
              <ToolboxList>
                {toolbox.map(([n, icon]) => <ToolboxItem key={n}><ToolboxButton type="button">{icon}<span>{n}</span></ToolboxButton></ToolboxItem>)}
              </ToolboxList>
              <V h={255} top={26} />
            </ToolboxWrap>
          </Body>
          <PanelHead $active><span>Fonts</span><Pin c="#fff" /></PanelHead>
          <Body>
            <PanelTools $pad={6} $gap={11}>
              <IconTool type="button" aria-label="Add"><S><path d="M12 1v22M1 12h22" stroke={red} strokeWidth="3" /></S></IconTool>
              <IconTool type="button" aria-label="Remove"><S><path d="M1 12h22" stroke={red} strokeWidth="3" /></S></IconTool>
              <IconTool type="button" aria-label="Replace"><S><path d="M3 10C4 2 14 0 20 6M21 14c-1 8-11 10-17 4" stroke="#a64bbd" strokeWidth="2.800" /><path d="M23 1v9h-9zM1 23v-9h9z" fill="#a64bbd" /></S></IconTool>
              <IconTool type="button" aria-label="Insert"><S><path d="M14 2H2v20h20V12" stroke="#a8073e" strokeWidth="3.500" /><path d="M22 2L10 14M8 7v9h9" stroke="#a8073e" strokeWidth="3" /></S></IconTool>
              <IconTool type="button" aria-label="Move up">{arrowUp(red)}</IconTool>
              <IconTool type="button" aria-label="Move down">{arrowDown(red)}</IconTool>
              <Dots />
            </PanelTools>
            <FontList />
          </Body>
          <DockTabs>
            {["Picture", "Fonts", "Gmov", "Video", "Audio"].map((t) => <DockTab type="button" key={t} $on={t === "Fonts"}>{t}</DockTab>)}
          </DockTabs>
        </Column>

        <Column>
          <DocTabs>
            <DocTab type="button" $on>Display</DocTab>
            <DocTab type="button">Program.s<S s={10} vb="0 0 10 10"><path d="M1 1l8 8M9 1L1 9" stroke="#7f9cc8" strokeWidth="1.500" /></S></DocTab>
            <Spacer />
            <Arrow type="button" aria-label="Open documents" $h={34}><Caret $s={7} /></Arrow>
          </DocTabs>
          <Canvas />
          <PanelHead $h={31}><span>Output</span><Pin /></PanelHead>
          <OutputRow>
            <OutputBox aria-label="Output" readOnly />
            <Events>
              <EventTabs>
                <button type="button">Touch Press Ev...</button>
                <button type="button">Touch Release...</button>
                <button type="button">Page Exit Event(...</button>
                <button type="button" aria-label="More events"><Caret $s={6} /></button>
              </EventTabs>
              <EventTools $gap={12}>
                <IconTool type="button" aria-label="Comment"><Comment c="#93c83c" /></IconTool>
                <IconTool type="button" aria-label="Uncomment"><Comment c="#93c83c" x="#e03040" /></IconTool>
              </EventTools>
              <Hint>( Preinitialize event execute before component refresh)</Hint>
              <Editor>
                <EditorMain>
                  <Code aria-label="Event code" />
                  <HScroll>
                    <Arrow type="button" aria-label="Scroll left" $h={18}><CaretLeft $s={6} $c="#4d5f86" /></Arrow>
                    <HThumb><HGrip /></HThumb>
                    <Arrow type="button" aria-label="Scroll right" $h={18}><CaretRight $s={6} $c="#4d5f86" /></Arrow>
                  </HScroll>
                </EditorMain>
                <V h={79} w={20} top={27} bottom={27} />
              </Editor>
            </Events>
          </OutputRow>
        </Column>

        <Column $w={270}>
          <PanelHead><span>Page</span><Pin /></PanelHead>
          <Body $h={397} $mb={7}>
            <PanelTools $pad={4} $gap={12}>
              <IconTool type="button" aria-label="Add page"><S><g fill="#fbd9a0" stroke="#e09a40">{page}</g><path d="M18 11v12M12 17h12" stroke="#3f9a2a" strokeWidth="5" /><path d="M18 13v8M14 17h8" stroke="#a6e07c" strokeWidth="2" /></S></IconTool>
              <IconTool type="button" aria-label="Delete page"><S><g fill="#eef8fd" stroke="#48a4cc">{page}</g><path d="M13 13l10 10M23 13L13 23" stroke="#c81828" strokeWidth="3.500" /></S></IconTool>
              <IconTool type="button" aria-label="Insert page"><S><path d="M1 6h2l2-3h6l2 3h10v16H1z" fill="#ffee00" stroke="#222" strokeWidth="1.600" /><path d="M1 8h22" stroke="#222" /><path d="M17 18H11V12M7 14l4-4 4 4" stroke="#111" strokeWidth="2.200" /></S></IconTool>
              <IconTool type="button" aria-label="Move page up">{arrowUp(red)}</IconTool>
              <IconTool type="button" aria-label="Move page down">{arrowDown(red)}</IconTool>
              <IconTool type="button" aria-label="Copy page"><S><path d="M1 1h9l4 4v16H1z" fill="#d9effa" stroke="#48a4cc" /><path d="M8 3h10l5 5v15H8z" fill="#fff" stroke="#48a4cc" strokeWidth="1.400" /></S></IconTool>
              <Dots />
            </PanelTools>
            <PageRow><span>0</span><PageName type="button"><S s={20} vb="0 0 20 20"><path d="M9 2h10v9H9zM2 9h9v9H2z" fill="#e8d36a" stroke="#8a7420" /><path d="M11 5h6M11 8h6M4 12h5M4 15h5" stroke="#6b5a18" /></S><span>page0</span></PageName></PageRow>
          </Body>
          <PanelHead><span>Attribute</span><Pin /></PanelHead>
          <Body>
            <AttrSelect>
              <select aria-label="Component" defaultValue="page0(Page)"><option>page0(Page)</option></select>
              <span><Caret /></span>
            </AttrSelect>
            <AttrTools>
              <AttrTool type="button" aria-label="Properties" $on><S><path d="M0 6h18v17H0z" fill="#fbfcff" stroke="#6f8dbc" /><path d="M0 6h18v3H0z" fill="#5b8fe0" /><path d="M3 13h5M3 16h5M3 19h5M10 13h6M10 16h6M10 19h6" stroke="#8fa6cc" /><path d="M4 9c3-5 6-8 11-7l6 1v7c-4 3-8 2-11 0l-5 2z" fill="#e3b53a" stroke="#8a6a18" /><path d="M21 1h3v10h-3z" fill="#3a9c4a" /></S></AttrTool>
              <AttrTool type="button" aria-label="Events" disabled><S><path d="M14 4l8 8-8 9-6-8z" fill="#b4b5ba" /><path d="M14 4l8 8-8 2-6-2z" fill="#dcdde2" /><path d="M0 9h6M2 13h5" stroke="#c9cad0" strokeWidth="1.500" /></S></AttrTool>
            </AttrTools>
            <GridWrap>
              <div>
                <AttrTable><tbody>
                  {attrs.map(([k, v]) => (
                    <AttrRow key={k} $green={k === "bco"}>
                      <th scope="row">{k}</th>
                      <td>{k === "bco" ? <div><Swatch />{v}</div> : v}</td>
                    </AttrRow>
                  ))}
                </tbody></AttrTable>
              </div>
              <PlainScroll>
                <button type="button" aria-label="Scroll up"><S w={10} h={7} vb="0 0 10 7"><path d="M1 6l4-4 4 4" stroke="#555" strokeWidth="2.400" /></S></button>
                <i />
                <button type="button" aria-label="Scroll down"><S w={10} h={7} vb="0 0 10 7"><path d="M1 1l4 4 4-4" stroke="#555" strokeWidth="2.400" /></S></button>
              </PlainScroll>
            </GridWrap>
            <Notes>Click the attribute to display corresponding notes</Notes>
          </Body>
        </Column>
      </Main>

      <StatusBar>
        <span>Encoding:iso-8859-5 | Model:NX4024T032_011  inch:3.2(240X400) Flash:4M RAM:3584B Frequency:48M |</span>
        <span>Coordinate X:-283  Y:-96</span>
      </StatusBar>

      <Taskbar>
        <Start type="button" aria-label="Start"><S s={20} vb="0 0 20 20"><path d="M0 3l8-1.200v7.700H0zM9 1.600L20 0v9.500H9zM0 10.500h8v7.700L0 17zM9 10.500h11V20L9 18.400z" fill="#000" /></S></Start>
        <Search>
          <S s={21} vb="0 0 21 21"><circle cx="13" cy="7.500" r="6.500" stroke="#111" strokeWidth="1.500" /><path d="M8.500 12L1 20" stroke="#111" strokeWidth="1.500" /></S>
          <input type="text" aria-label="Поиск" placeholder="Введите здесь текст для поиска" />
        </Search>
        <TaskButton type="button" aria-label="Task view" $w={63}><S s={22} vb="0 0 22 22"><path d="M1 1v4h13V1M1 21v-4h13v4M1.500 7v8h12V7zM19 1v5M19 12v9" stroke="#111" strokeWidth="1.300" /><path d="M17.500 7h3v3h-3z" fill="#111" /></S></TaskButton>
        <TaskButton type="button" aria-label="Explorer" $open><S s={28} vb="0 0 28 28"><path d="M0 3h12l2 3h13v18H0z" fill="#fccf5c" /><path d="M0 2h12l2 4H0z" fill="#dd9a10" /><path d="M5 25V14h18v11h-5v-5h-8v5z" fill="#3d96dc" /></S></TaskButton>
        <TaskButton type="button" aria-label="Chrome" $open><S s={28} vb="0 0 28 28"><path d="M14 14L2.300 7A14 14 0 0 1 26.500 8H14z" fill="#dc4a3d" /><path d="M14 14L2.300 7A14 14 0 0 0 13 27.800L19 17z" fill="#1da160" /><path d="M14 8h12.500A14 14 0 0 1 13 27.800L19.500 17z" fill="#ffce42" /><circle cx="14" cy="14" r="6.500" fill="#fff" /><circle cx="14" cy="14" r="5.200" fill="#4688f4" /></S></TaskButton>
        <TaskButton type="button" aria-label="Word" $open><S w={30} h={28} vb="0 0 30 28"><path d="M7 0h22v7H7z" fill="#41a5ee" /><path d="M7 7h22v7H7z" fill="#2b7cd3" /><path d="M7 14h22v7H7z" fill="#185abd" /><path d="M7 21h22v7H7z" fill="#103f91" /><path d="M0 6h15v16H0z" fill="#1a4fae" /><Letter x={7.5} y={18} s={12} c="#fff">W</Letter></S></TaskButton>
        <TaskButton type="button" aria-label="Nextion Editor" $open $on><Logo s={30} /></TaskButton>
        <Tray>
          <TrayButton type="button" aria-label="Hidden icons"><S w={16} h={9} vb="0 0 16 9"><path d="M1 8l7-7 7 7" stroke="#111" strokeWidth="1.500" /></S></TrayButton>
          <TrayButton type="button" aria-label="OneDrive"><S w={20} h={14} vb="0 0 20 14"><path d="M4 13C0 13-.5 7 4 6 5 0 12-.5 14 4c6 0 7 9 1 9z" fill="#8f8f8f" stroke="#111" /><path d="M2 11l8-4 8 4c-1 1-2 1.500-3 1.500H4c-1 0-2-.5-2-1.500z" fill="#eee" /></S></TrayButton>
          <TrayButton type="button" aria-label="Battery"><S w={20} h={14} vb="0 0 20 14"><path d="M4.500 3.500h13v9h-13z" stroke="#000" /><path d="M6 5h10v6H6z" fill="#000" /><path d="M18 6h1.500v4H18zM0 2h5v4H0z" fill="#000" /><path d="M1 0v2M4 0v2M2.500 6v7" stroke="#000" /></S></TrayButton>
          <TrayButton type="button" aria-label="Network"><S s={18} vb="0 0 18 18"><path d="M2 16A14 14 0 0 1 16 2M5 17A11 11 0 0 1 17 6M9 17a8 8 0 0 1 8-7" stroke="#222" strokeWidth="1.300" /><circle cx="14" cy="15" r="2" fill="#111" /></S></TrayButton>
          <TrayButton type="button" aria-label="Volume"><S w={20} h={16} vb="0 0 20 16"><path d="M1 5h3l4-4v14l-4-4H1zM11 5c1.500 2 1.500 4 0 6M14 3c2.500 3 2.500 7 0 10" stroke="#111" strokeWidth="1.200" /><path d="M17 1c3 4 3 10 0 14" stroke="#888" /></S></TrayButton>
          <TrayButton type="button" $pl={4}>ENG</TrayButton>
          <Clock>14:45<br />10.08.2020</Clock>
          <Notify type="button" aria-label="Notifications"><S s={22} vb="0 0 22 22"><path d="M1 1h20v15h-9l-4 4v-4H1z" fill="#111" /><path d="M4 5h14M4 8.500h14M4 12h9" stroke="#ddd" strokeWidth="1.300" /><circle cx="17" cy="16" r="4.500" fill="#111" stroke="#ddd" /><circle cx="15.500" cy="14.500" r="3" fill="#ddd" /></S></Notify>
        </Tray>
      </Taskbar>
      <FontCreator />
    </Window>
  );
}
